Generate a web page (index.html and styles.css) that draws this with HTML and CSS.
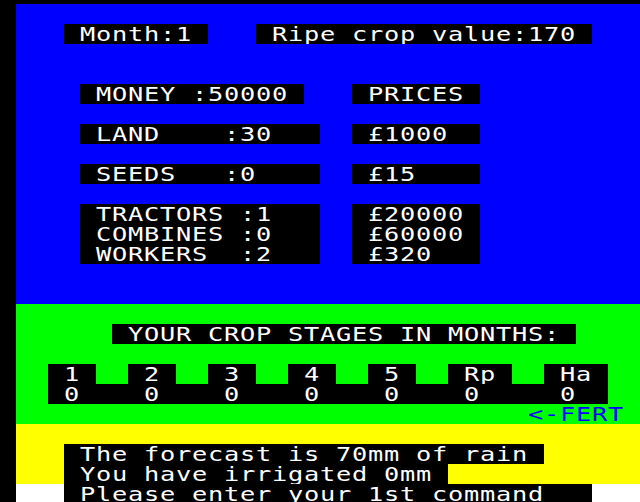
FILE: index.html
```html
<!DOCTYPE html>
<html>
<head>
<meta charset="utf-8">
<link rel="stylesheet" href="styles.css">
</head>
<body>
<div class="screen">
  <div class="grid">
    <div class="row blue"></div>
    <div class="row blue"><span>   </span><span class="k"> Month:1 </span><span>   </span><span class="k"> Ripe crop value:170 </span></div>
    <div class="row blue"></div>
    <div class="row blue"></div>
    <div class="row blue"><span>    </span><span class="k"> MONEY :50000 </span><span>   </span><span class="k"> PRICES </span></div>
    <div class="row blue"></div>
    <div class="row blue"><span>    </span><span class="k"> LAND    :30   </span><span>  </span><span class="k"> £1000  </span></div>
    <div class="row blue"></div>
    <div class="row blue"><span>    </span><span class="k"> SEEDS   :0    </span><span>  </span><span class="k"> £15    </span></div>
    <div class="row blue"></div>
    <div class="row blue"><span>    </span><span class="k"> TRACTORS :1   </span><span>  </span><span class="k"> £20000 </span></div>
    <div class="row blue"><span>    </span><span class="k"> COMBINES :0   </span><span>  </span><span class="k"> £60000 </span></div>
    <div class="row blue"><span>    </span><span class="k"> WORKERS  :2   </span><span>  </span><span class="k"> £320   </span></div>
    <div class="row blue"></div>
    <div class="row blue"></div>
    <div class="row green"></div>
    <div class="row green"><span>      </span><span class="k"> YOUR CROP STAGES IN MONTHS: </span></div>
    <div class="row green"></div>
    <div class="row green"><span>  </span><span class="k"> 1 </span><span>  </span><span class="k"> 2 </span><span>  </span><span class="k"> 3 </span><span>  </span><span class="k"> 4 </span><span>  </span><span class="k"> 5 </span><span>  </span><span class="k"> Rp </span><span>  </span><span class="k"> Ha </span></div>
    <div class="row green"><span>  </span><span class="k"> 0    0    0    0    0    0     0  </span></div>
    <div class="row green"><span>                                </span><span class="fert">&lt;-FERT</span></div>
    <div class="row yellow"></div>
    <div class="row yellow"><span>   </span><span class="k"> The forecast is 70mm of rain </span></div>
    <div class="row yellow"><span>   </span><span class="k"> You have irrigated 0mm </span></div>
    <div class="row white"><span>   </span><span class="k"> Please enter your 1st command   </span></div>
  </div>
</div>
</body>
</html>
```

FILE: styles.css
```css
html, body {
  margin: 0;
  padding: 0;
  background: #000;
  overflow: hidden;
  width: 640px;
  height: 502px;
}

.screen {
  padding: 4px 0 0 16px;
  background: #000;
}

.grid {
  width: 480px;
  transform: scaleX(1.3333333);
  transform-origin: 0 0;
}

.row {
  height: 20px;
  line-height: 20px;
  white-space: pre;
  font-family: "DejaVu Sans Mono", monospace;
  font-size: 19px;
  letter-spacing: 0.56px;
  color: #fff;
  overflow: hidden;
}

.row span {
  display: inline-block;
  height: 20px;
  vertical-align: top;
}

.blue { background: #0000ff; }
.green { background: #00ff00; }
.yellow { background: #ffff00; }
.white { background: #ffffff; }

.k { background: #000; }

.fert { color: #0000ff; }
```
